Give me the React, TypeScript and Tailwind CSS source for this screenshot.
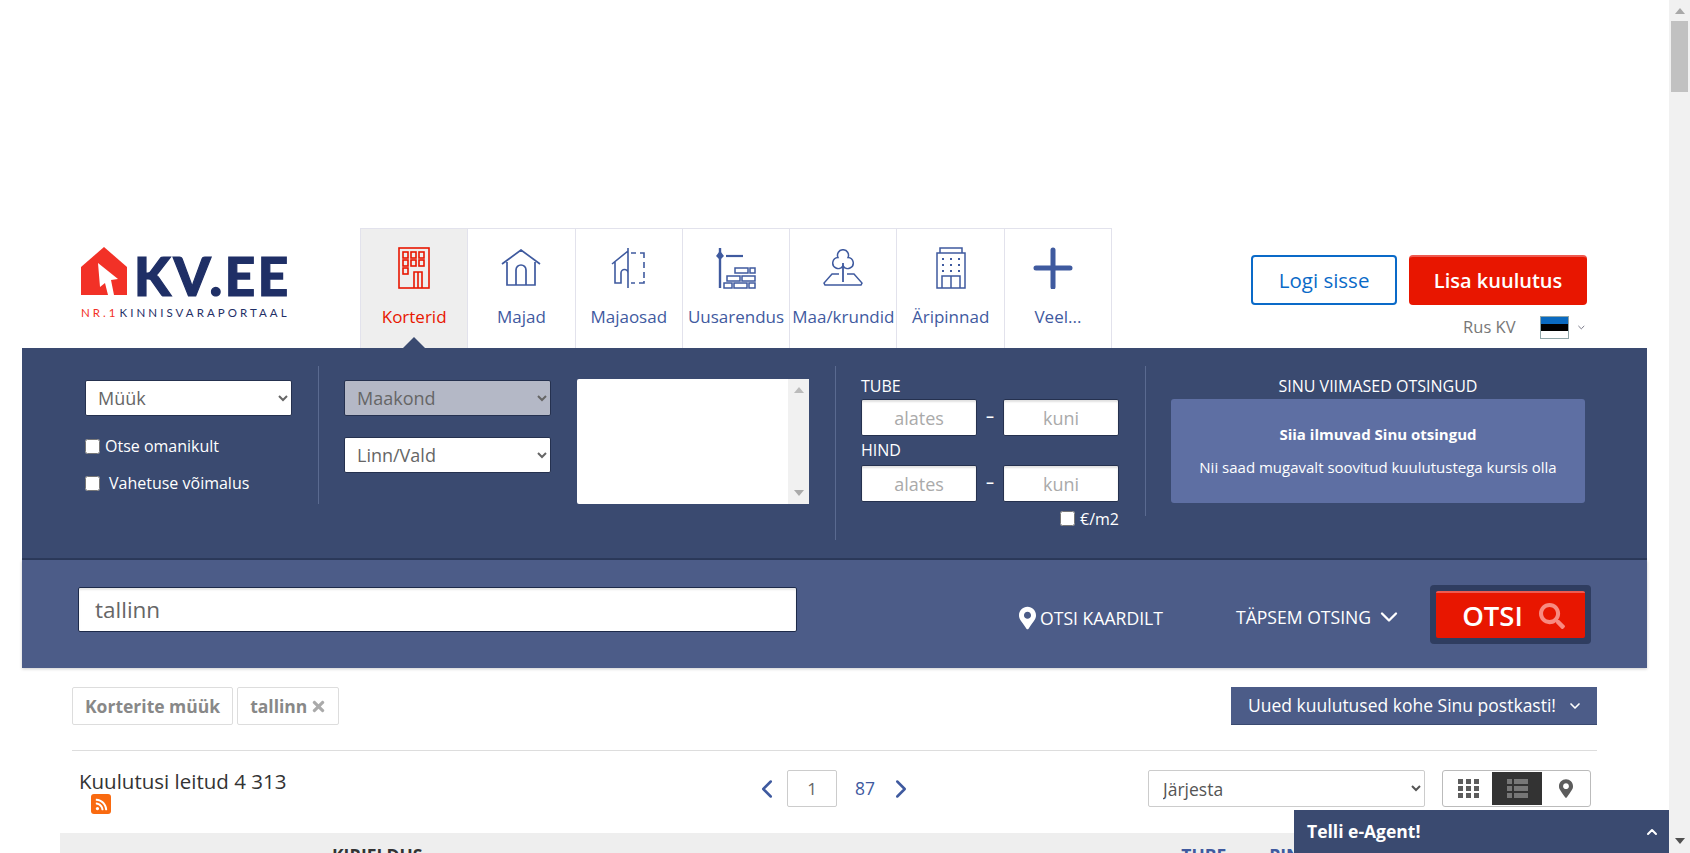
import { ChevronDown, ChevronLeft, ChevronRight, ChevronUp } from "lucide-react";
import { FaMapMarkerAlt, FaRss, FaSearch, FaTimes } from "react-icons/fa";
import type { ReactNode } from "react";

const selectClass =
  "block h-[36px] w-full rounded-[2px] border border-[#25314f] pl-[8px] text-[18px] text-[#666]";
const fieldClass =
  "h-[37px] w-[116px] rounded-[2px] border border-[#25314f] bg-white text-center text-[18px] shadow-[inset_0_2px_2px_rgba(0,0,0,0.12)] placeholder:text-[#aaa]";

function BuildingIcon() {
  return (
    <svg width="32" height="42" viewBox="0 0 32 42" fill="none" stroke="#e81600" strokeWidth="1.6">
      <rect x="1" y="1" width="30" height="40" />
      {[5, 13, 21].map((y, row) =>
        [5, 13, 21].map((x) =>
          row === 2 && x > 5 ? null : <rect key={`${x}-${y}`} x={x} y={y} width="5" height="6" />,
        ),
      )}
      <path d="M16 41V25h8v16M20 25v16" />
    </svg>
  );
}

function HouseIcon() {
  return (
    <svg width="40" height="38" viewBox="0 0 40 38" fill="none" stroke="#3f5a9f" strokeWidth="1.7">
      <path d="M1 15 20 1l19 14M6 13v23h28V13" />
      <path d="M15 36V21a5 5 0 0 1 10 0v15" />
    </svg>
  );
}

function SemiHouseIcon() {
  return (
    <svg width="34" height="42" viewBox="0 0 34 42" fill="none" stroke="#3f5a9f" strokeWidth="1.6" className="-ml-[2px]">
      <path d="M1 17 17 4M17 1v40M4 15v21h6V26a3.5 3.5 0 0 1 7 0" />
      <path d="M20 6h5M29 6h4v5M33 15v6M33 25v6M33 34v2h-5M24 36h-4" />
    </svg>
  );
}

function DevelopmentIcon() {
  return (
    <svg width="40" height="42" viewBox="0 0 40 42" fill="none" stroke="#3f5a9f" strokeWidth="1.5">
      <path d="M4 1v40" strokeWidth="2.4" />
      <path d="M4 5 1 9l3 3 3-3z" fill="#3f5a9f" />
      <path d="M10 9h17" strokeWidth="2.2" />
      <rect x="19" y="21" width="13" height="5" />
      <rect x="34" y="21" width="5" height="5" />
      <rect x="11" y="29" width="13" height="5" />
      <rect x="26" y="29" width="13" height="5" />
      <rect x="8" y="36" width="8" height="5" />
      <rect x="18" y="36" width="13" height="5" />
      <rect x="33" y="36" width="6" height="5" />
    </svg>
  );
}

function LandIcon() {
  return (
    <svg width="40" height="38" viewBox="0 0 40 38" fill="none" stroke="#3f5a9f" strokeWidth="1.5">
      <path d="M15 8.5a5.5 5.5 0 1 1 10 0 5.5 5.5 0 0 1 2 10.5 5.5 5.5 0 0 1-7-2 5.5 5.5 0 0 1-7 2 5.5 5.5 0 0 1 2-10.500z" />
      <path d="M20 14v19" strokeWidth="1.8" />
      <path d="M16 25H9L1 34l1 2h36l1-2-8-9h-7" />
    </svg>
  );
}

function OfficeIcon() {
  const dots = [0, 1, 2].flatMap((row) => [0, 1, 2].map((col) => [col, row]));
  return (
    <svg width="30" height="42" viewBox="0 0 30 42" fill="none" stroke="#3f5a9f" strokeWidth="1.5">
      <path d="M4 6V1h22v5M1 41V6h28v35z" />
      {dots.map(([col, row]) => (
        <rect key={`${col}-${row}`} x={6 + col * 8} y={11 + row * 6} width="2" height="2" fill="#3f5a9f" stroke="none" />
      ))}
      <path d="M6 41V29h18v12M15 29v12" />
    </svg>
  );
}

function PlusIcon() {
  return (
    <svg width="40" height="42" viewBox="0 0 40 42" fill="none" stroke="#3f5a9f" strokeWidth="5" strokeLinecap="round" className="-ml-[9px]">
      <path d="M20 3v37M3 21h34" />
    </svg>
  );
}

const TABS: { label: string; icon: ReactNode; active?: boolean }[] = [
  { label: "Korterid", icon: <BuildingIcon />, active: true },
  { label: "Majad", icon: <HouseIcon /> },
  { label: "Majaosad", icon: <SemiHouseIcon /> },
  { label: "Uusarendus", icon: <DevelopmentIcon /> },
  { label: "Maa/krundid", icon: <LandIcon /> },
  { label: "Äripinnad", icon: <OfficeIcon /> },
  { label: "Veel...", icon: <PlusIcon /> },
];

function Logo() {
  return (
    <div className="ml-[81px] mt-[19px] w-[208px]">
      <div className="flex h-[48px] items-end">
        <svg width="46" height="48" viewBox="0 0 46 48" className="shrink-0">
          <path d="M23 0 46 20v28H0V20z" fill="#f23127" />
          <path d="M17 16 37 32l-7 1 3 15h-6l-3-12-5 4z" fill="#fff" />
        </svg>
        <span className="ml-[7px] font-['Lato'] text-[53px] font-black leading-[38px] tracking-[2.6px] text-[#1f2f66] [-webkit-text-stroke:1.2px_#1f2f66]">
          KV.EE
        </span>
      </div>
      <div className="mt-[12px] flex whitespace-nowrap font-['Lato'] text-[11.5px] leading-[12px] tracking-[3.05px] text-[#1f2f66]">
        <span className="text-[#f23127]">NR.1</span>
        <span className="ml-[1px]">KINNISVARAPORTAAL</span>
      </div>
    </div>
  );
}

function Tabs() {
  return (
    <nav className="ml-[71px] flex h-[120px] border-r border-t border-[#e2e2ec]">
      {TABS.map((tab) => (
        <div
          key={tab.label}
          className={`relative flex w-[107.3px] flex-col items-center border-l border-[#e2e2ec] ${
            tab.active ? "bg-[#eeeeee] text-[#e81600]" : "text-[#3f5a9f]"
          }`}
        >
          <div className="mt-[18px] flex h-[42px] items-center">{tab.icon}</div>
          <span className="mt-[16px] whitespace-nowrap text-[17px] font-medium leading-[24px]">{tab.label}</span>
          {tab.active ? (
            <span className="absolute bottom-0 left-1/2 h-0 w-0 -translate-x-1/2 border-x-[11px] border-b-[11px] border-x-transparent border-b-[#3a4a70]" />
          ) : null}
        </div>
      ))}
    </nav>
  );
}

function HeaderActions() {
  return (
    <div className="ml-[139px] mt-[27px] w-[336px]">
      <div className="flex gap-[12px]">
        <button className="h-[50px] w-[146px] rounded-[4px] border-2 border-[#0a6ac8] text-[20.500px] font-medium text-[#0a6ac8]">
          Logi sisse
        </button>
        <button className="h-[50px] w-[178px] rounded-[4px] border-t-2 border-[#ee5a50] bg-[#e81600] text-[20px] font-semibold text-white">
          Lisa kuulutus
        </button>
      </div>
      <div className="mt-[11px] flex h-[23px] items-center">
        <span className="ml-[212px] w-[53px] whitespace-nowrap text-[16.500px] text-[#777]">Rus KV</span>
        <div className="ml-[25px] flex h-[23px] w-[30px] flex-col border border-[#8fa5a8]">
          <span className="flex-1 bg-[#0a6ac0]" />
          <span className="flex-1 bg-black" />
          <span className="flex-1 bg-white" />
        </div>
        <ChevronDown className="ml-[7px] h-[11px] w-[11px] text-[#667]" />
      </div>
    </div>
  );
}

function Divider({ height }: { height: string }) {
  return <div className={`ml-[26px] mt-[18px] w-px shrink-0 bg-[#5a6a90] ${height}`} />;
}

function SearchPanel() {
  return (
    <div className="flex h-[212px] border-b-2 border-[#2c3a5b] bg-[#3a4a70] text-white">
      <div className="ml-[63px] mt-[32px] w-[207px]">
        <select className={`${selectClass} bg-white`}>
          <option>Müük</option>
        </select>
        <label className="mt-[22px] flex h-[16px] items-center text-[16px]">
          <input type="checkbox" className="h-[15px] w-[15px]" />
          <span className="ml-[5px]">Otse omanikult</span>
        </label>
        <label className="mt-[21px] flex h-[16px] items-center text-[16px]">
          <input type="checkbox" className="h-[15px] w-[15px]" />
          <span className="ml-[9px]">Vahetuse võimalus</span>
        </label>
      </div>
      <Divider height="h-[138px]" />
      <div className="ml-[25px] mt-[32px] w-[207px]">
        <select className={`${selectClass} bg-[#b4b8c6]`}>
          <option>Maakond</option>
        </select>
        <select className={`${selectClass} mt-[21px] bg-white`}>
          <option>Linn/Vald</option>
        </select>
      </div>
      <div className="ml-[26px] mt-[31px] flex h-[125px] w-[232px] justify-end rounded-[2px] bg-white">
        <div className="flex w-[21px] flex-col items-center justify-between bg-[#f1f1f1] py-[8px]">
          <span className="h-0 w-0 border-x-[5px] border-b-[6px] border-x-transparent border-b-[#bbb]" />
          <span className="h-0 w-0 border-x-[5px] border-t-[6px] border-x-transparent border-t-[#aaa]" />
        </div>
      </div>
      <Divider height="h-[174px]" />
      <div className="ml-[25px] mt-[26px] w-[258px] text-[16px]">
        <div className="leading-[25px]">TUBE</div>
        <div className="flex items-center justify-between">
          <input placeholder="alates" className={fieldClass} />
          <span className="-mt-[3px] text-[16px] font-semibold">–</span>
          <input placeholder="kuni" className={fieldClass} />
        </div>
        <div className="leading-[29px]">HIND</div>
        <div className="flex items-center justify-between">
          <input placeholder="alates" className={fieldClass} />
          <span className="-mt-[3px] text-[16px] font-semibold">–</span>
          <input placeholder="kuni" className={fieldClass} />
        </div>
        <label className="mt-[8px] flex h-[17px] items-center justify-end">
          <input type="checkbox" className="h-[15px] w-[15px]" />
          <span className="ml-[5px]">€/m2</span>
        </label>
      </div>
      <Divider height="h-[150px]" />
      <div className="ml-[25px] mt-[26px] w-[414px] text-center">
        <div className="text-[16px] leading-[25px]">SINU VIIMASED OTSINGUD</div>
        <div className="flex h-[104px] flex-col items-center rounded-[3px] bg-[#5e6fa3] pt-[25px] text-[15px] leading-[20px]">
          <span className="font-bold">Siia ilmuvad Sinu otsingud</span>
          <span className="mt-[13px]">Nii saad mugavalt soovitud kuulutustega kursis olla</span>
        </div>
      </div>
    </div>
  );
}

function SearchBar() {
  return (
    <div className="flex h-[108px] items-start bg-[#4c5c88] text-white shadow-[0_1px_3px_rgba(0,0,0,0.2)]">
      <input
        defaultValue="tallinn"
        className="ml-[56px] mt-[27px] h-[45px] w-[719px] rounded-[2px] border border-[#1d2a4a] bg-white px-[16px] text-[22.500px] text-[#666] shadow-[inset_0_2px_2px_rgba(0,0,0,0.1)]"
      />
      <div className="ml-[222px] mt-[44px] flex h-[28px] items-center">
        <FaMapMarkerAlt className="h-[26px] w-[17px]" />
        <span className="ml-[4px] text-[17.600px] leading-[28px]">OTSI KAARDILT</span>
      </div>
      <div className="ml-[73px] mt-[43px] flex h-[28px] items-center">
        <span className="text-[17.600px] leading-[28px]">TÄPSEM OTSING</span>
        <ChevronDown className="ml-[4px] h-[28px] w-[28px]" strokeWidth={2} />
      </div>
      <div className="ml-[27px] mt-[25px] rounded-[4px] bg-[#2f3d60] p-[6px]">
        <button className="flex h-[47px] w-[149px] items-center rounded-[2px] border-t-2 border-[#ee5a50] bg-[#e81600] pl-[26px] text-[27.500px] font-semibold">
          OTSI
          <FaSearch className="ml-[16px] h-[26px] w-[26px] text-[#f88a80]" />
        </button>
      </div>
    </div>
  );
}

function Chip({ children }: { children: ReactNode }) {
  return (
    <div className="flex h-[38px] items-center rounded-[2px] border border-[#ddd] px-[12px] text-[17.500px] font-bold text-[#888]">
      {children}
    </div>
  );
}

function ViewToggle() {
  const cells = [0, 1, 2].flatMap((row) => [0, 1, 2].map((col) => [col, row]));
  return (
    <div className="flex h-[37px] w-[149px] items-stretch rounded-[3px] border border-[#bbb] p-[1px]">
      <div className="flex w-[48px] items-center justify-center">
        <svg width="21" height="19" viewBox="0 0 21 19" fill="#5c5c5c">
          {cells.map(([col, row]) => (
            <rect key={`${col}-${row}`} x={col * 8} y={row * 7} width="5" height="5" />
          ))}
        </svg>
      </div>
      <div className="flex w-[50px] items-center justify-center bg-[#333]">
        <svg width="21" height="19" viewBox="0 0 21 19" fill="#777">
          {[0, 7, 14].map((y) => (
            <g key={y}>
              <rect x="0" y={y} width="5" height="5" />
              <rect x="7" y={y} width="14" height="5" />
            </g>
          ))}
        </svg>
      </div>
      <div className="flex flex-1 items-center justify-center">
        <FaMapMarkerAlt className="h-[19px] w-[14px] text-[#5c5c5c]" />
      </div>
    </div>
  );
}

function Results() {
  return (
    <div className="relative flex-1">
      <div className="mx-[72px] mt-[19px] flex h-[38px] items-start gap-[4px]">
        <Chip>Korterite müük</Chip>
        <Chip>
          tallinn
          <FaTimes className="ml-[4px] h-[17px] w-[15px] text-[#aaa]" />
        </Chip>
        <button className="ml-auto flex h-[38px] w-[366px] items-center border-b border-[#3a4a70] bg-[#4c5c88] pl-[17px] text-[17.500px] text-white">
          Uued kuulutused kohe Sinu postkasti!
          <ChevronDown className="ml-[11px] h-[16px] w-[16px]" strokeWidth={2.5} />
        </button>
      </div>
      <div className="mx-[72px] mt-[25px] h-px bg-[#dddddd]" />
      <div className="mx-[72px] mt-[19px] flex h-[63px] items-start">
        <div className="ml-[7px] w-[300px]">
          <div className="h-[24px] whitespace-nowrap text-[20.500px] font-medium leading-[22px] text-[#333]">
            Kuulutusi leitud 4 313
          </div>
          <div className="ml-[12px] flex h-[20px] w-[20px] items-center justify-center rounded-[3px] bg-[#f96a10]">
            <FaRss className="h-[13px] w-[13px] text-white" />
          </div>
        </div>
        <div className="ml-[373px] flex h-[37px] items-center text-[#3f5a9f]">
          <ChevronLeft className="h-[30px] w-[30px]" strokeWidth={2} />
          <div className="ml-[5px] flex h-[37px] w-[50px] items-center justify-center rounded-[2px] border border-[#ccc] text-[17px] text-[#666]">
            1
          </div>
          <span className="ml-[18px] text-[17.500px]">87</span>
          <ChevronRight className="ml-[11px] h-[30px] w-[30px]" strokeWidth={2} />
        </div>
        <select className="ml-[232px] h-[37px] w-[277px] rounded-[2px] border border-[#ccc] bg-white pl-[10px] text-[17.500px] text-[#555]">
          <option>Järjesta</option>
        </select>
        <div className="ml-[17px]">
          <ViewToggle />
        </div>
      </div>
      <div className="mx-[60px] flex h-[20px] overflow-hidden bg-[#eeeeee] text-[17.500px] font-bold leading-[44px]">
        <span className="ml-[272px] text-[#333]">KIRJELDUS</span>
        <span className="ml-[759px] text-[#3f5a9f]">TUBE</span>
        <span className="ml-[43px] text-[#3f5a9f]">PINDALA</span>
      </div>
      <div className="absolute bottom-0 right-0 flex h-[43px] w-[375px] items-center justify-between bg-[#3a4a70] pl-[13px] pr-[9px] text-white">
        <span className="text-[17.500px] font-bold">Telli e-Agent!</span>
        <ChevronUp className="h-[16px] w-[16px]" strokeWidth={3} />
      </div>
    </div>
  );
}

function PageScrollbar() {
  return (
    <aside className="flex h-full w-[21px] shrink-0 flex-col items-center bg-[#f1f1f1]">
      <span className="mt-[8px] h-0 w-0 border-x-[5px] border-b-[6px] border-x-transparent border-b-[#a8a8a8]" />
      <div className="mt-[7px] h-[71px] w-[17px] bg-[#c1c1c1]" />
      <span className="mb-[9px] mt-auto h-0 w-0 border-x-[5px] border-t-[6px] border-x-transparent border-t-[#505050]" />
    </aside>
  );
}

export default function App() {
  return (
    <div className="flex h-[853px] overflow-hidden bg-white font-['Open_Sans',sans-serif]">
      <main className="flex min-w-0 flex-1 flex-col pt-[228px]">
        <header className="flex h-[120px]">
          <Logo />
          <Tabs />
          <HeaderActions />
        </header>
        <div className="mx-[22px]">
          <SearchPanel />
          <SearchBar />
        </div>
        <Results />
      </main>
      <PageScrollbar />
    </div>
  );
}
